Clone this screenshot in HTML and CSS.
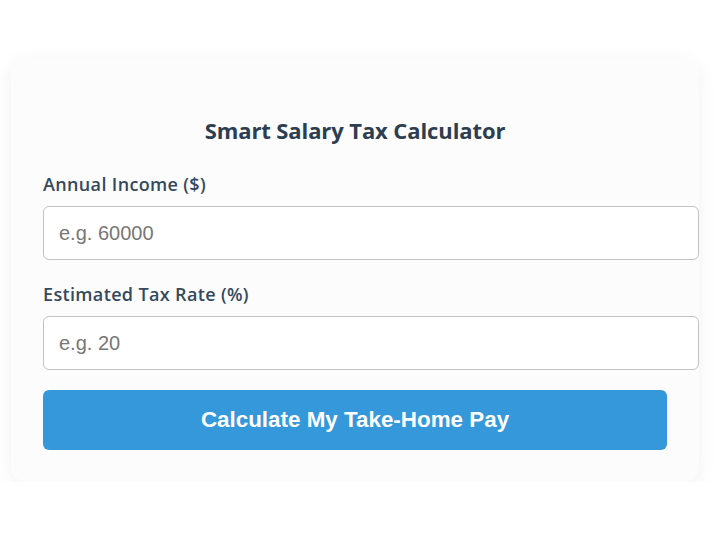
FILE: index.html
```html
<!DOCTYPE html>
<html lang="en">
<head>
<meta charset="utf-8">
<title>Smart Salary Tax Calculator</title>
<link rel="stylesheet" href="styles.css">
</head>
<body>
<main class="card">
  <h1 class="title">Smart Salary Tax Calculator</h1>
  <form class="form">
    <label class="label" for="income">Annual Income ($)</label>
    <input class="field" id="income" type="number" placeholder="e.g. 60000">
    <label class="label label-next" for="rate">Estimated Tax Rate (%)</label>
    <input class="field" id="rate" type="number" placeholder="e.g. 20">
    <button class="btn" type="button">Calculate My Take-Home Pay</button>
  </form>
</main>
</body>
</html>
```
FILE: styles.css
```css
html, body {
  margin: 0;
  padding: 0;
  background: #ffffff;
}
body {
  padding: 58px 0 0 11px;
}
.card {
  width: 688px;
  box-sizing: border-box;
  padding: 32px;
  background: #fcfcfc;
  border-radius: 15px;
  box-shadow: 0 4px 20px rgba(0, 0, 0, 0.06);
}
.title {
  margin: 26px 0 28px;
  font-family: "Open Sans", "Noto Sans", sans-serif;
  font-weight: 700;
  font-size: 22px;
  letter-spacing: -0.1px;
  line-height: 28px;
  color: #2c3e50;
  text-align: center;
}
.form {
  display: flex;
  flex-direction: column;
  align-items: flex-start;
}
.label {
  font-family: "Open Sans", "Noto Sans", sans-serif;
  font-weight: 600;
  font-size: 18px;
  letter-spacing: 0.35px;
  line-height: 24px;
  color: #34495e;
  margin-bottom: 10px;
}
.label-next {
  margin-top: 22px;
}
.field {
  width: 100%;
  padding: 15px;
  border: 1px solid #c3c3c3;
  border-radius: 6px;
  background: #ffffff;
  font-family: "Liberation Sans", Arial, sans-serif;
  font-size: 20px;
  line-height: 22px;
  color: #333;
  margin: 0;
}
.field::placeholder {
  color: #777777;
}
.btn {
  margin-top: 20px;
  width: 100%;
  height: 60px;
  border: none;
  border-radius: 6px;
  background: #3498db;
  color: #ffffff;
  font-family: "Liberation Sans", Arial, sans-serif;
  font-weight: 700;
  font-size: 22.4px;
}
```
